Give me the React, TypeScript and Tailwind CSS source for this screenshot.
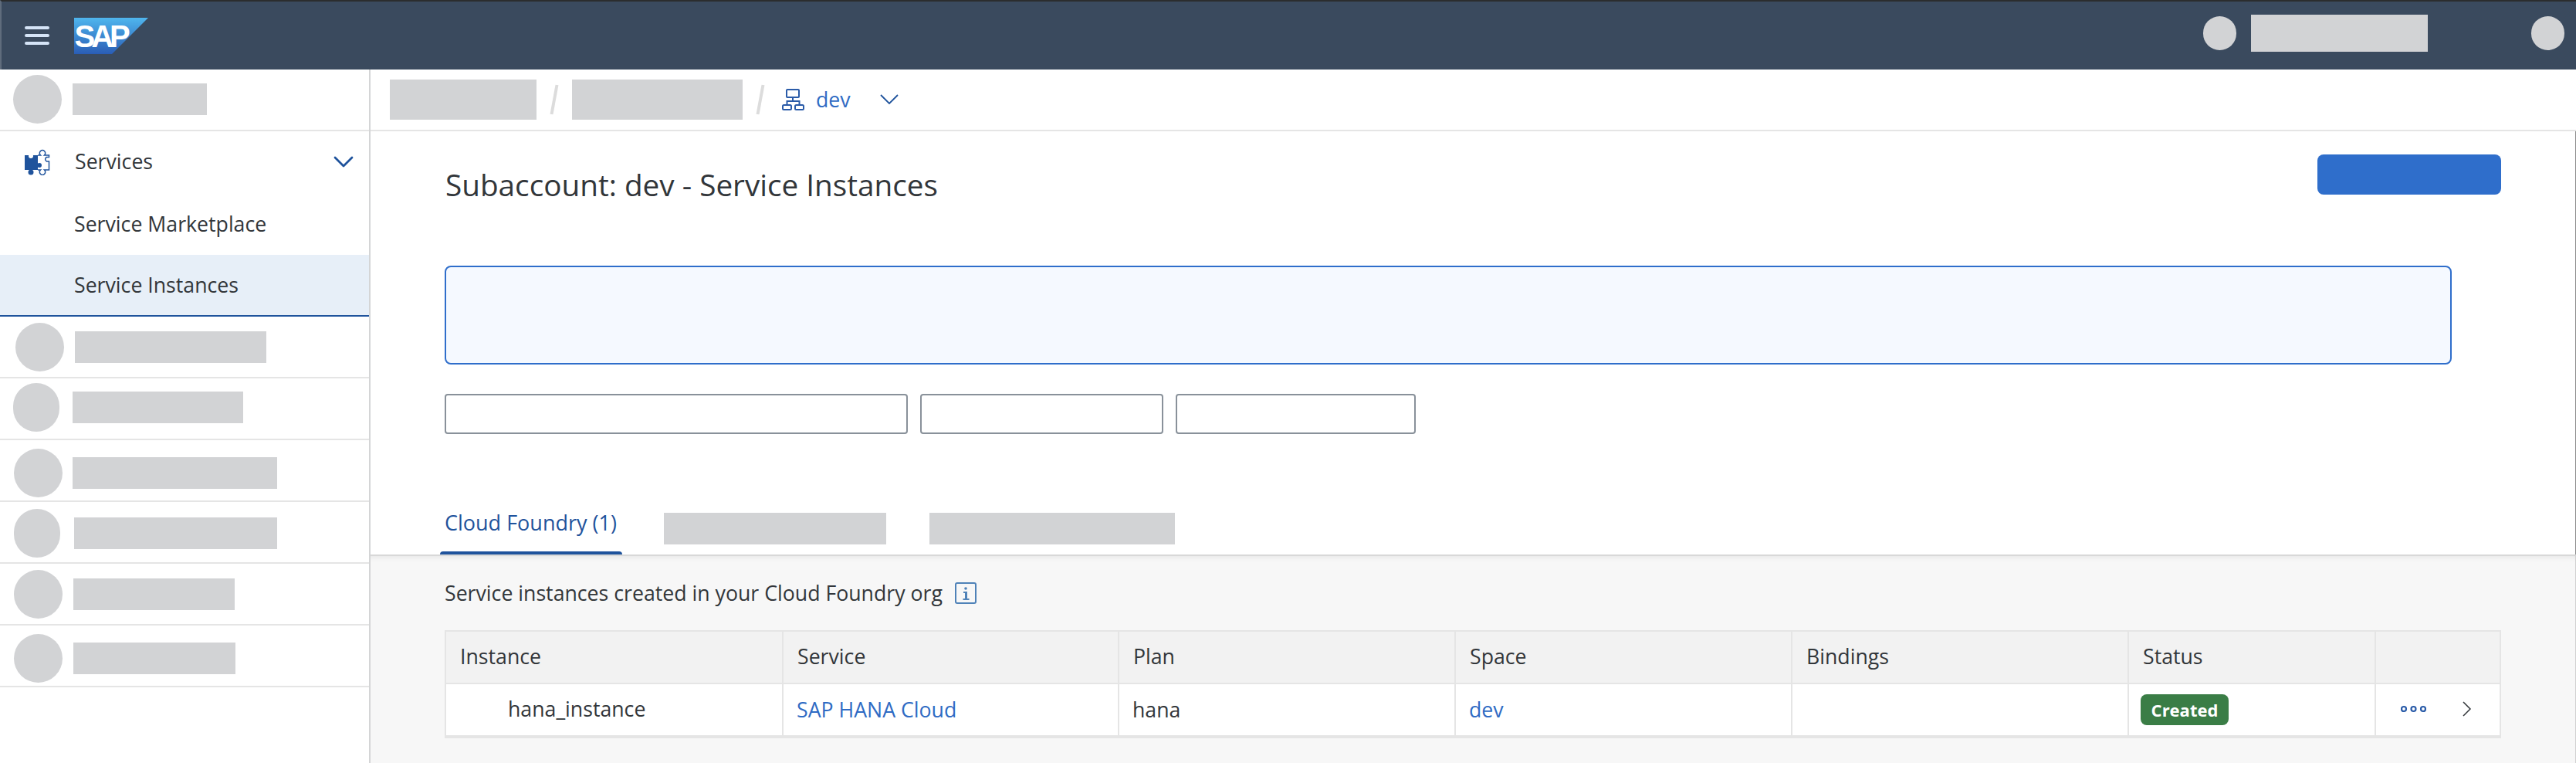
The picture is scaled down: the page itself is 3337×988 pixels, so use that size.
const sans = "font-['Open_Sans','Liberation_Sans',Arial,sans-serif]";

function Bar({ w, h = 'h-[41px]', ml = '' }: { w: string; h?: string; ml?: string }) {
  return <div className={`${w} ${h} ${ml} bg-[#d2d3d5] shrink-0`} />;
}

function SapLogo() {
  return (
    <svg width="96" height="47" viewBox="0 0 96 47" className="shrink-0">
      <defs>
        <linearGradient id="sapg" x1="0" y1="0" x2="0" y2="1">
          <stop offset="0" stopColor="#4fb6ee" />
          <stop offset="1" stopColor="#2a5db5" />
        </linearGradient>
      </defs>
      <polygon points="0,0 96,0 49,47 0,47" fill="url(#sapg)" />
      <text x="0.500" y="38" fill="#fff" fontFamily="Liberation Sans" fontWeight="700" fontSize="40" letterSpacing="-5">SAP</text>
    </svg>
  );
}

function Puzzle() {
  return (
    <svg width="33" height="34" viewBox="0 0 33 34" className="shrink-0">
      <rect x="0" y="8" width="17" height="19" fill="#1f539c" />
      <circle cx="8" cy="9" r="3" fill="#fff" />
      <circle cx="8" cy="30" r="3.500" fill="#1f539c" />
      <circle cx="19" cy="21" r="3" fill="#1f539c" />
      <path d="M17 8H20.500A3.700 3.700 0 1 1 25.500 8H31.500V10.500H28.500a3 3 0 0 0 0 5.500H31.500V27H25.500A3.700 3.700 0 1 1 20.500 27H17" fill="none" stroke="#1f539c" strokeWidth="1.500" />
    </svg>
  );
}

function Hierarchy() {
  return (
    <svg width="29" height="28" viewBox="0 0 29 28" fill="none" stroke="#2a5ba8" strokeWidth="2" className="shrink-0">
      <rect x="6" y="1" width="16" height="10" rx="1" />
      <path d="M14 11v5M6.500 21v-5h16v5" />
      <rect x="1" y="21" width="11" height="6" rx="1.500" />
      <rect x="17" y="21" width="11" height="6" rx="1.500" />
    </svg>
  );
}

const rows = [
  { pl: 'pl-[20px]', pad: '', c: 'w-[63px]', gap: 'gap-[14px]', bar: 'w-[248px]' },
  { pl: 'pl-[17px]', pad: 'pb-[3px]', c: 'w-[60px]', gap: 'gap-[17px]', bar: 'w-[221px]' },
  { pl: 'pl-[18px]', pad: 'pt-[7px]', c: 'w-[63px]', gap: 'gap-[13px]', bar: 'w-[265px]' },
  { pl: 'pl-[18px]', pad: 'pt-[3px]', c: 'w-[60px]', gap: 'gap-[18px]', bar: 'w-[263px]' },
  { pl: 'pl-[18px]', pad: '', c: 'w-[63px]', gap: 'gap-[14px]', bar: 'w-[209px]' },
  { pl: 'pl-[18px]', pad: 'pt-[7px]', c: 'w-[63px]', gap: 'gap-[14px]', bar: 'w-[210px]' },
];

const headers = ['Instance', 'Service', 'Plan', 'Space', 'Bindings', 'Status', ''];
const grid = 'grid grid-cols-[437px_435px_436px_436px_436px_320px_1fr]';

export default function App() {
  return (
    <div className={`h-screen w-full flex flex-col overflow-hidden bg-white text-[#32363a] ${sans}`}>
      <header className="h-[90px] shrink-0 flex items-center bg-[#3a4a5e] border-t-2 border-t-[#2b2d2e] border-l-2 border-l-[#5f6c7c]">
        <div className="w-[94px] flex justify-center pr-[2px]">
          <svg width="32" height="24" viewBox="0 0 32 24" className="shrink-0">
            <g fill="#d5e4f7">
              <rect x="0" y="0" width="32" height="4" rx="2" />
              <rect x="0" y="10" width="32" height="4" rx="2" />
              <rect x="0" y="20" width="32" height="4" rx="2" />
            </g>
          </svg>
        </div>
        <SapLogo />
        <div className="ml-auto flex items-center pr-[15px] pb-[6px]">
          <div className="w-[43px] h-[44px] rounded-full bg-[#d2d3d5]" />
          <div className="w-[229px] h-[48px] ml-[19px] bg-[#d2d3d5]" />
          <div className="w-[43px] h-[44px] ml-[134px] rounded-full bg-[#d2d3d5]" />
        </div>
      </header>

      <div className="flex flex-1 min-h-0">
        <aside className="w-[480px] shrink-0 border-r-2 border-r-[#d4d5d6] flex flex-col">
          <div className="h-[80px] pl-[17px] pb-[2px] flex items-center gap-[14px] border-b-2 border-b-[#e5e5e5]">
            <div className="w-[63px] h-[63px] rounded-full bg-[#d2d3d5]" />
            <Bar w="w-[174px]" />
          </div>
          <div className="h-[80px] flex items-center pl-[32px] pr-[20px] text-[26.700px]">
            <Puzzle />
            <span className="ml-[32px] pb-[2px]">Services</span>
            <svg width="26" height="16" viewBox="0 0 26 16" fill="none" stroke="#1f539c" strokeWidth="2.800" strokeLinecap="round" strokeLinejoin="round" className="ml-auto">
              <path d="M2 2l11 11L24 2" />
            </svg>
          </div>
          <div className="h-[80px] flex items-center pl-[96px] text-[26.700px]">Service Marketplace</div>
          <div className="h-[80px] flex items-center pl-[96px] text-[26.700px] bg-[#e7eff8] border-b-2 border-b-[#1f539c]">Service Instances</div>
          {rows.map((r, i) => (
            <div key={i} className={`h-[80px] ${r.pl} ${r.pad} ${r.gap} flex items-center border-b-2 border-b-[#e5e5e5]`}>
              <div className={`${r.c} h-[63px] rounded-full bg-[#d2d3d5] shrink-0`} />
              <Bar w={r.bar} />
            </div>
          ))}
        </aside>

        <main className="flex-1 min-w-0 flex flex-col">
          <div className="h-[80px] shrink-0 flex items-center pl-[25px] border-b-2 border-b-[#e5e5e5]">
            <Bar w="w-[190px]" h="h-[52px]" />
            <div className="w-[46px] flex justify-center text-[#dcdcdc]">
              <svg width="12" height="40" viewBox="0 0 12 40"><path d="M9.500 1L2.500 39" stroke="currentColor" strokeWidth="4" /></svg>
            </div>
            <Bar w="w-[221px]" h="h-[52px]" />
            <div className="w-[46px] flex justify-center text-[#dcdcdc]">
              <svg width="12" height="40" viewBox="0 0 12 40"><path d="M9.500 1L2.500 39" stroke="currentColor" strokeWidth="4" /></svg>
            </div>
            <div className="ml-[5px] flex items-center">
              <Hierarchy />
              <span className="ml-[15px] text-[26.700px] text-[#2f6bc4]">dev</span>
              <svg width="24" height="13" viewBox="0 0 24 13" fill="none" stroke="#1f539c" strokeWidth="1.800" className="ml-[38px]">
                <path d="M1 1l11 11L23 1" />
              </svg>
            </div>
          </div>

          <section className="h-[548px] shrink-0 pl-[96px] flex flex-col border-r border-r-[#8b8b8b]">
            <div className="flex items-start pr-[96px]">
              <h1 className="pt-[45px] pl-[1px] text-[38.700px] font-normal leading-[48px]">Subaccount: dev - Service Instances</h1>
              <div className="ml-auto mt-[30px] w-[238px] h-[52px] rounded-[8px] bg-[#2f6ecb]" />
            </div>
            <div className="mt-[81px] w-[2600px] h-[128px] rounded-[8px] border-2 border-[#2f6ecb] bg-[#f5f9ff]" />
            <div className="mt-[38px] flex gap-[16px]">
              <div className="w-[600px] h-[52px] rounded-[4px] border-2 border-[#89919a] bg-white" />
              <div className="w-[315px] h-[52px] rounded-[4px] border-2 border-[#89919a] bg-white" />
              <div className="w-[311px] h-[52px] rounded-[4px] border-2 border-[#89919a] bg-white" />
            </div>
            <div className="mt-auto flex items-stretch h-[74px] -ml-[6px]">
              <div className="w-[236px] flex flex-col text-[27px] text-[#1f539c]">
                <div className="flex-1 px-[6px] pt-[13px] whitespace-nowrap">Cloud Foundry (1)</div>
                <div className="h-[4px] rounded-t-[4px] bg-[#1f539c]" />
              </div>
              <Bar w="w-[288px]" ml="ml-[54px] mt-[20px]" />
              <Bar w="w-[318px]" ml="ml-[56px] mt-[20px]" />
            </div>
          </section>

          <section className="flex-1 min-h-0 bg-[#f7f7f7] pl-[96px] pr-[96px] border-t-2 border-t-[#d8d8d8] shadow-[inset_0_8px_8px_-8px_rgba(0,0,0,0.1)] border-r border-r-[#d0d0d0]">
            <div className="pt-[30px] flex items-center text-[26.700px] leading-[36px]">
              Service instances created in your Cloud Foundry org
              <svg width="28" height="28" viewBox="0 0 28 28" className="ml-[16px] shrink-0">
                <rect x="1" y="1" width="26" height="26" rx="2" fill="none" stroke="#4f82b8" strokeWidth="2" />
                <circle cx="14" cy="8" r="1.800" fill="#4f82b8" />
                <path d="M11 12h5v9h2.500v2h-8v-2h2.500v-7h-2z" fill="#4f82b8" />
              </svg>
            </div>
            <div className="mt-[30px] border-2 border-[#e5e5e5] border-b-4 text-[26.700px]">
              <div className={`${grid} h-[68px] bg-[#f2f2f2] border-b-2 border-b-[#e5e5e5]`}>
                {headers.map((h, i) => (
                  <div key={i} className={`flex items-center pl-[18px] pb-[2px] ${i < 6 ? 'border-r-2 border-r-[#e5e5e5]' : ''}`}>{h}</div>
                ))}
              </div>
              <div className={`${grid} h-[66px] bg-white`}>
                <div className="flex items-center pl-[80px] pb-[2px] border-r-2 border-r-[#e5e5e5]">hana_instance</div>
                <div className="flex items-center pl-[17px] border-r-2 border-r-[#e5e5e5] text-[#2f6bc4]">SAP HANA Cloud</div>
                <div className="flex items-center pl-[17px] border-r-2 border-r-[#e5e5e5]">hana</div>
                <div className="flex items-center pl-[17px] border-r-2 border-r-[#e5e5e5] text-[#2f6bc4]">dev</div>
                <div className="border-r-2 border-r-[#e5e5e5]" />
                <div className="flex items-center pl-[15px] border-r-2 border-r-[#e5e5e5]">
                  <span className="w-[114px] h-[40px] rounded-[8px] bg-[#3a7d46] text-white font-bold text-[22px] flex items-center justify-center">Created</span>
                </div>
                <div className="flex items-center pl-[32px] pb-[2px]">
                  <svg width="33" height="12" viewBox="0 0 33 12" fill="none" stroke="#2a5ba8" strokeWidth="2.200" className="shrink-0">
                    <circle cx="4" cy="6" r="3" /><circle cx="16.500" cy="6" r="3" /><circle cx="29" cy="6" r="3" />
                  </svg>
                  <svg width="12" height="20" viewBox="0 0 12 20" fill="none" stroke="#32363a" strokeWidth="1.500" className="ml-[47px] shrink-0">
                    <path d="M1 1l9 9-9 9" />
                  </svg>
                </div>
              </div>
            </div>
          </section>
        </main>
      </div>
    </div>
  );
}
